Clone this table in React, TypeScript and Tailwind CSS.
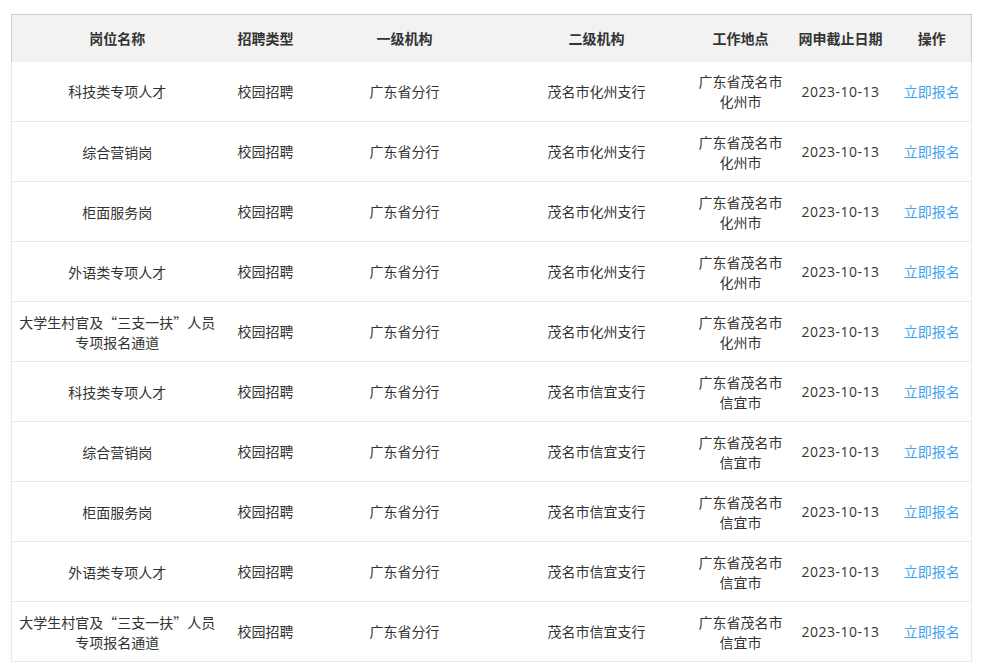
import React from "react";

type Row = { name: string[]; org2: string; loc: string[] };

const cities: [string, string][] = [
  ["茂名市化州支行", "化州市"],
  ["茂名市信宜支行", "信宜市"],
];
const names: string[][] = [
  ["科技类专项人才"],
  ["综合营销岗"],
  ["柜面服务岗"],
  ["外语类专项人才"],
  ["大学生村官及“三支一扶”人员", "专项报名通道"],
];

const rows: Row[] = cities.flatMap(([org2, city]) =>
  names.map((n) => ({ name: n, org2, loc: ["广东省茂名市", city] }))
);

const headers = ["岗位名称", "招聘类型", "一级机构", "二级机构", "工作地点", "网申截止日期", "操作"];
const widths = [211, 86, 192, 192, 96, 104, 79];

export default function App() {
  return (
    <div
      className="w-[986px] h-[669px] bg-white pt-[14px] pl-[11px] overflow-hidden text-[#333]"
      style={{ fontFamily: '"Microsoft YaHei", "Noto Sans CJK SC", "Noto Sans", sans-serif' }}
    >
      <table className="table-fixed border-collapse w-[960px] text-[14px]">
        <colgroup>
          {widths.map((w, i) => (
            <col key={i} style={{ width: w }} />
          ))}
        </colgroup>
        <thead>
          <tr className="bg-[#f2f2f2] h-[47px]">
            {headers.map((h, i) => (
              <th
                key={h}
                className={`font-bold text-center p-0 border-t border-[#cccccc] ${i === 0 ? "border-l" : ""} ${
                  i === headers.length - 1 ? "border-r" : ""
                }`}
              >
                {h}
              </th>
            ))}
          </tr>
        </thead>
        <tbody>
          {rows.map((r, idx) => (
            <tr key={idx} className="h-[60px] border-b border-[#e8e8e8]">
              <td className="text-center leading-[20px] p-0 border-l border-[#e8e8e8]">
                {r.name.map((l) => (
                  <div key={l}>{l}</div>
                ))}
              </td>
              <td className="text-center p-0">校园招聘</td>
              <td className="text-center p-0">广东省分行</td>
              <td className="text-center p-0">{r.org2}</td>
              <td className="text-center leading-[20px] p-0">
                {r.loc.map((l) => (
                  <div key={l}>{l}</div>
                ))}
              </td>
              <td className="text-center p-0 font-['Open_Sans',sans-serif] tracking-[0.5px]">2023-10-13</td>
              <td className="text-center p-0 border-r border-[#e8e8e8]">
                <a className="text-[#45a3ee] cursor-pointer">立即报名</a>
              </td>
            </tr>
          ))}
        </tbody>
      </table>
    </div>
  );
}
